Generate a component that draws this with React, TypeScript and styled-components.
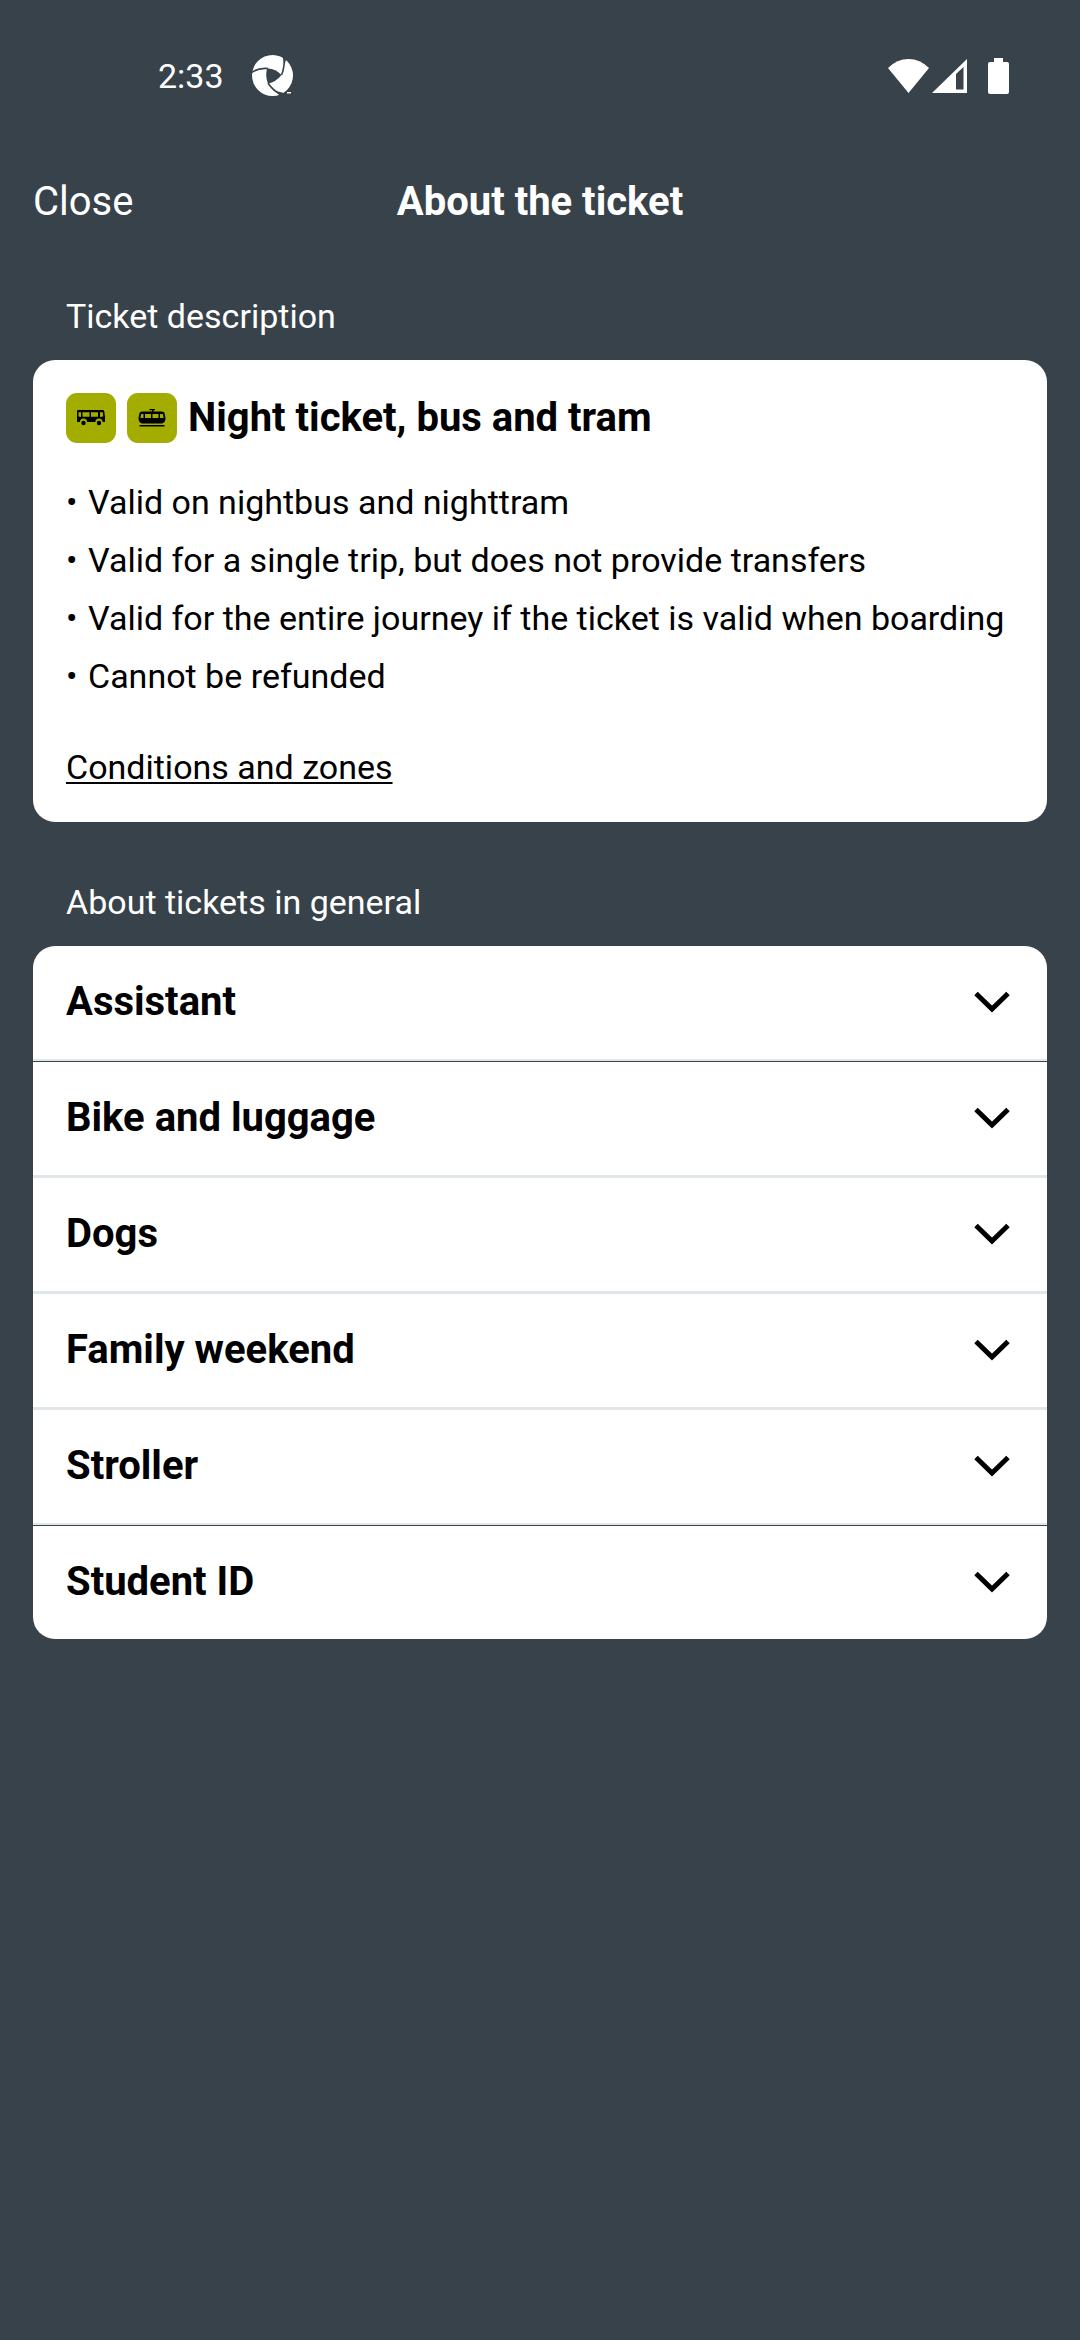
import React from "react";
import styled, { createGlobalStyle } from "styled-components";

const color = {
  page: "#38424a",
  card: "#ffffff",
  ink: "#000000",
  accent: "#a2ad00",
  line: "#e1e6e9",
};

const GlobalStyle = createGlobalStyle`
  *, *::before, *::after { box-sizing: border-box; }
  body {
    margin: 0;
    background: ${color.page};
    font-family: Roboto, "Noto Sans", sans-serif;
    color: #ffffff;
  }
  h1, h2, p, ul { margin: 0; padding: 0; }
`;

const Screen = styled.div`
  min-height: 100vh;
  background: ${color.page};
`;

const StatusBar = styled.div`
  display: flex;
  align-items: center;
  justify-content: space-between;
  height: 152px;
  padding: 0 71px 0 158px;
`;

const StatusGroup = styled.div<{ $gap: number }>`
  display: flex;
  align-items: center;
  gap: ${(p) => p.$gap}px;
`;

const Clock = styled.time`
  font-size: 34px;
  line-height: 40px;
`;

const TitleBar = styled.header`
  display: grid;
  grid-template-columns: 1fr auto 1fr;
  align-items: center;
  height: 100px;
  padding: 0 33px;
`;

const CloseButton = styled.button`
  justify-self: start;
  padding: 0;
  border: 0;
  background: none;
  color: inherit;
  font: 400 40px/48px Roboto, "Noto Sans", sans-serif;
  cursor: pointer;
`;

const Title = styled.h1`
  font-size: 40px;
  line-height: 48px;
  font-weight: 700;
`;

const Main = styled.main`
  display: flex;
  flex-direction: column;
  gap: 60px;
  padding: 44px 33px;
`;

const Section = styled.section`
  display: flex;
  flex-direction: column;
  gap: 24px;
`;

const SectionLabel = styled.h2`
  padding: 0 33px;
  font-size: 34px;
  line-height: 40px;
  font-weight: 400;
`;

const Card = styled.div`
  overflow: hidden;
  border-radius: 22px;
  background: ${color.card};
  color: ${color.ink};
`;

const TicketCard = styled(Card)`
  padding: 33px;
`;

const TicketHeading = styled.div`
  display: flex;
  align-items: center;
  gap: 11px;
`;

const ModeBadge = styled.span`
  display: flex;
  align-items: center;
  justify-content: center;
  width: 50px;
  height: 50px;
  border-radius: 11px;
  background: ${color.accent};
`;

const TicketName = styled.h2`
  font-size: 40px;
  line-height: 48px;
  font-weight: 700;
`;

const Facts = styled.ul`
  display: flex;
  flex-direction: column;
  padding: 30px 0 40px;
  list-style: none;
`;

const Fact = styled.li`
  display: flex;
  gap: 10px;
  font-size: 34px;
  line-height: 58px;

  &::before {
    content: "•";
    width: 12px;
  }
`;

const TextLink = styled.a`
  display: block;
  width: fit-content;
  color: inherit;
  font-size: 34px;
  line-height: 44px;
  text-decoration: underline;
  text-decoration-thickness: 2px;
  text-underline-offset: 3px;
`;

type Divider = "soft" | "strong" | "none";

const dividerWidth: Record<Divider, number> = { soft: 3, strong: 2, none: 0 };

const Topic = styled.button<{ $divider: Divider }>`
  display: flex;
  align-items: center;
  justify-content: space-between;
  width: 100%;
  margin-bottom: ${(p) => (p.$divider === "strong" ? 1 : 0)}px;
  padding: 32px 37px 33px 33px;
  border: 0;
  border-bottom: ${(p) => dividerWidth[p.$divider]}px solid ${color.line};
  background: ${color.card};
  color: inherit;
  font: 700 40px/48px Roboto, "Noto Sans", sans-serif;
  text-align: left;
  cursor: pointer;
`;

const TopicList = styled(Card)`
  background: ${color.page};
`;

const PinwheelIcon = () => (
  <svg width="42" height="42" viewBox="0 0 42 42" aria-hidden="true">
    <circle cx="20.5" cy="20.5" r="20.5" fill="#fff" />
    <path d="M15 13.500Q23 13 29.500 20Q24 27 16 28.500Q13 21 15 13.500Z" fill={color.page} />
    <g fill="none" stroke={color.page} strokeWidth="1.6">
      <path d="M-1 18Q6 12.500 16 13.500" />
      <path d="M29.500 20Q33 12 32 1" />
      <path d="M16 28Q21 36 30 40" />
    </g>
    <path d="M31 2L34 5L32.500 10Z" fill={color.page} />
    <path d="M24 36L32 38L28 41Z" fill={color.page} />
    <path d="M35 37h4v1.500h-4z" fill="#fff" />
  </svg>
);

const WifiIcon = () => (
  <svg width="42" height="36" viewBox="0 0 42 36" aria-hidden="true">
    <path d="M0 10Q9 1 20.500 1T41 10L20.500 35Z" fill="#fff" />
  </svg>
);

const SignalIcon = () => (
  <svg width="36" height="36" viewBox="0 0 36 36" aria-hidden="true">
    <path fillRule="evenodd" d="M0 35L35 1V35ZM24 16V31.500H31.500V9Z" fill="#fff" />
  </svg>
);

const BatteryIcon = () => (
  <svg width="21" height="36" viewBox="0 0 21 36" aria-hidden="true">
    <path d="M6 0h9v4h4a2 2 0 0 1 2 2v28a2 2 0 0 1-2 2H2a2 2 0 0 1-2-2V6a2 2 0 0 1 2-2h4Z" fill="#fff" />
  </svg>
);

const BusIcon = () => (
  <svg width="28" height="16" viewBox="0 0 28 16" aria-hidden="true">
    <path
      fillRule="evenodd"
      d="M1 0H26Q27.200 0 27.400 2L28 7V12H25.600A3.600 3.600 0 0 0 18.400 12H10.100A3.600 3.600 0 0 0 2.900 12H0V1Q0 0 1 0ZM1.500 2.300V6.500L4 7V2.300ZM5.500 2.300V6.800H12.500V2.300ZM14 2.300V6.800H21V2.300ZM23 2.300V7L26.200 6.500L25.800 2.300Z"
    />
    <circle cx="6.500" cy="13" r="2.200" />
    <circle cx="22" cy="13" r="2.200" />
  </svg>
);

const TramIcon = () => (
  <svg width="28" height="20" viewBox="0 0 28 20" aria-hidden="true">
    <path
      fillRule="evenodd"
      d="M11.500 1H17V2.200H15.500V3.500H24Q26 3.500 26.500 5L27.500 10Q27.500 14.500 24 15.500H4Q.5 14.500 .5 10L1.500 5Q2 3.500 4 3.500H14V2.200H11.500ZM3.200 6L2.400 10H5.500V6ZM7 6V10H13V6ZM14.500 6V10H20.500V6ZM22 6V10H25.600L24.800 6Z"
    />
    <path d="M1.500 17H26.500V18.500H1.500Z" />
  </svg>
);

const Chevron = () => (
  <svg width="36" height="22" viewBox="0 0 36 22" aria-hidden="true">
    <path d="M2 2.500L18 18L34 2.500" fill="none" stroke="#000" strokeWidth="5" />
  </svg>
);

const facts = [
  "Valid on nightbus and nighttram",
  "Valid for a single trip, but does not provide transfers",
  "Valid for the entire journey if the ticket is valid when boarding",
  "Cannot be refunded",
];

const topics: { name: string; divider: Divider }[] = [
  { name: "Assistant", divider: "strong" },
  { name: "Bike and luggage", divider: "soft" },
  { name: "Dogs", divider: "soft" },
  { name: "Family weekend", divider: "soft" },
  { name: "Stroller", divider: "strong" },
  { name: "Student ID", divider: "none" },
];

export default function App() {
  return (
    <Screen>
      <GlobalStyle />
      <StatusBar>
        <StatusGroup $gap={28}>
          <Clock>2:33</Clock>
          <PinwheelIcon />
        </StatusGroup>
        <StatusGroup $gap={20}>
          <StatusGroup $gap={2}>
            <WifiIcon />
            <SignalIcon />
          </StatusGroup>
          <BatteryIcon />
        </StatusGroup>
      </StatusBar>
      <TitleBar>
        <CloseButton type="button">Close</CloseButton>
        <Title>About the ticket</Title>
      </TitleBar>
      <Main>
        <Section>
          <SectionLabel>Ticket description</SectionLabel>
          <TicketCard>
            <TicketHeading>
              <ModeBadge><BusIcon /></ModeBadge>
              <ModeBadge><TramIcon /></ModeBadge>
              <TicketName>Night ticket, bus and tram</TicketName>
            </TicketHeading>
            <Facts>
              {facts.map((fact) => (
                <Fact key={fact}>{fact}</Fact>
              ))}
            </Facts>
            <TextLink href="#conditions">Conditions and zones</TextLink>
          </TicketCard>
        </Section>
        <Section>
          <SectionLabel>About tickets in general</SectionLabel>
          <TopicList>
            {topics.map((topic) => (
              <Topic key={topic.name} type="button" aria-expanded={false} $divider={topic.divider}>
                {topic.name}
                <Chevron />
              </Topic>
            ))}
          </TopicList>
        </Section>
      </Main>
    </Screen>
  );
}
